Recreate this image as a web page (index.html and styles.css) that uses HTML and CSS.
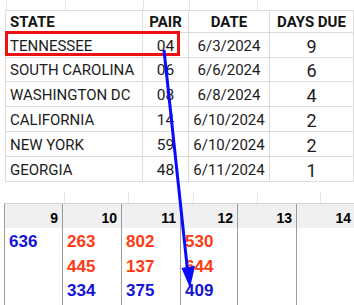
FILE: index.html
```html
<!DOCTYPE html>
<html>
<head>
<meta charset="utf-8">
<link rel="stylesheet" href="styles.css">
</head>
<body>
<div class="page">
  <div class="strip strip-top">
    <span class="sc" style="width:59px"></span>
    <span class="sc" style="width:78px"></span>
    <span class="sc" style="width:46px"></span>
    <span class="sc" style="width:68px"></span>
    <span class="sc" style="width:64px"></span>
  </div>
  <div class="table">
    <div class="cell head left">STATE</div>
    <div class="cell head">PAIR</div>
    <div class="cell head">DATE</div>
    <div class="cell head">DAYS DUE</div>

    <div class="cell left">TENNESSEE</div>
    <div class="cell num">04</div>
    <div class="cell">6/3/2024</div>
    <div class="cell big">9</div>

    <div class="cell left">SOUTH CAROLINA</div>
    <div class="cell num">06</div>
    <div class="cell">6/6/2024</div>
    <div class="cell big">6</div>

    <div class="cell left">WASHINGTON DC</div>
    <div class="cell num">08</div>
    <div class="cell">6/8/2024</div>
    <div class="cell big">4</div>

    <div class="cell left">CALIFORNIA</div>
    <div class="cell num">14</div>
    <div class="cell">6/10/2024</div>
    <div class="cell big">2</div>

    <div class="cell left">NEW YORK</div>
    <div class="cell num">59</div>
    <div class="cell">6/10/2024</div>
    <div class="cell big">2</div>

    <div class="cell left">GEORGIA</div>
    <div class="cell num">48</div>
    <div class="cell">6/11/2024</div>
    <div class="cell big">1</div>
  </div>

  <div class="strip strip-bottom">
    <span class="sc" style="width:64px"></span>
    <span class="sc" style="width:64px"></span>
    <span class="sc" style="width:65px"></span>
    <span class="sc" style="width:64px"></span>
    <span class="sc" style="width:63px"></span>
  </div>
  <div class="cal">
    <div class="col">
      <div class="chead">9</div>
      <div class="val blue">636</div>
    </div>
    <div class="col">
      <div class="chead">10</div>
      <div class="val red">263</div>
      <div class="val red">445</div>
      <div class="val blue">334</div>
    </div>
    <div class="col">
      <div class="chead">11</div>
      <div class="val red">802</div>
      <div class="val red">137</div>
      <div class="val blue">375</div>
    </div>
    <div class="col">
      <div class="chead">12</div>
      <div class="val red">530</div>
      <div class="val red">644</div>
      <div class="val blue">409</div>
    </div>
    <div class="col">
      <div class="chead">13</div>
    </div>
    <div class="col last">
      <div class="chead">14</div>
    </div>
  </div>

  <div class="redbox"></div>
  <svg class="arrow" width="354" height="305" viewBox="0 0 354 305">
    <line x1="164" y1="50" x2="187.5" y2="270" stroke="#0a0aff" stroke-width="3"/>
    <polygon points="181.5,268 195,266 190,288" fill="#0a0aff"/>
  </svg>
</div>
</body>
</html>
```

FILE: styles.css
```css
html, body {
  margin: 0;
  padding: 0;
  background: #ffffff;
}
.page {
  position: relative;
  width: 354px;
  height: 305px;
  overflow: hidden;
  font-family: Roboto, "Liberation Sans", sans-serif;
  color: #1c1c1c;
}
.strip {
  display: flex;
}
.strip-top {
  height: 10px;
  padding-left: 6px;
}
.strip-top .sc {
  box-sizing: border-box;
  height: 10px;
  border-left: 1px solid #e4e4e4;
}
.strip-bottom {
  height: 11px;
  margin-top: 10px;
  padding-left: 1px;
}
.strip-bottom .sc {
  box-sizing: border-box;
  height: 11px;
  border-right: 1px solid #e4e4e4;
}
.table {
  display: grid;
  grid-template-columns: 137px 46px 81px 84px;
  grid-template-rows: 22px 25px 24px 25px 25px 25px 25px;
  margin-left: 5px;
  border-top: 1px solid #dcdcdc;
  border-left: 1px solid #dcdcdc;
  width: 348px;
}
.cell {
  box-sizing: border-box;
  border-right: 1px solid #dcdcdc;
  border-bottom: 1px solid #dcdcdc;
  display: flex;
  align-items: center;
  justify-content: center;
  font-size: 15px;
  white-space: nowrap;
  padding-top: 1px;
}
.cell.left {
  justify-content: flex-start;
  padding-left: 4px;
}
.cell.num {
  font-size: 15.5px;
}
.cell.big {
  font-size: 18px;
  padding-top: 2px;
}
.cell.head {
  font-weight: 700;
  font-size: 15px;
  color: #141414;
  padding-top: 0;
}
.cal {
  display: grid;
  grid-template-columns: 58px 59px 59px 57px 59px 58px;
  margin-left: 4px;
  border-left: 1px solid #9c9c9c;
  border-top: 1px solid #d4d4d4;
  height: 102px;
  font-family: "Liberation Sans", Arial, sans-serif;
}
.col {
  box-sizing: border-box;
  border-right: 1px solid #9c9c9c;
  display: flex;
  flex-direction: column;
}
.col.last {
  border-right: 0;
}
.chead {
  height: 24px;
  background: #f0f0f0;
  text-align: right;
  padding-right: 4px;
  font-weight: 700;
  font-size: 14px;
  line-height: 28px;
  color: #000000;
}
.val {
  height: 24.5px;
  line-height: 27px;
  padding-left: 4px;
  font-weight: 700;
  font-size: 17px;
}
.val.blue {
  color: #1414d8;
}
.val.red {
  color: #ff3a12;
}
.redbox {
  position: absolute;
  left: 5px;
  top: 31px;
  width: 175px;
  height: 25px;
  box-sizing: border-box;
  border: 3px solid #ee1111;
}
.arrow {
  position: absolute;
  left: 0;
  top: 0;
}
```
